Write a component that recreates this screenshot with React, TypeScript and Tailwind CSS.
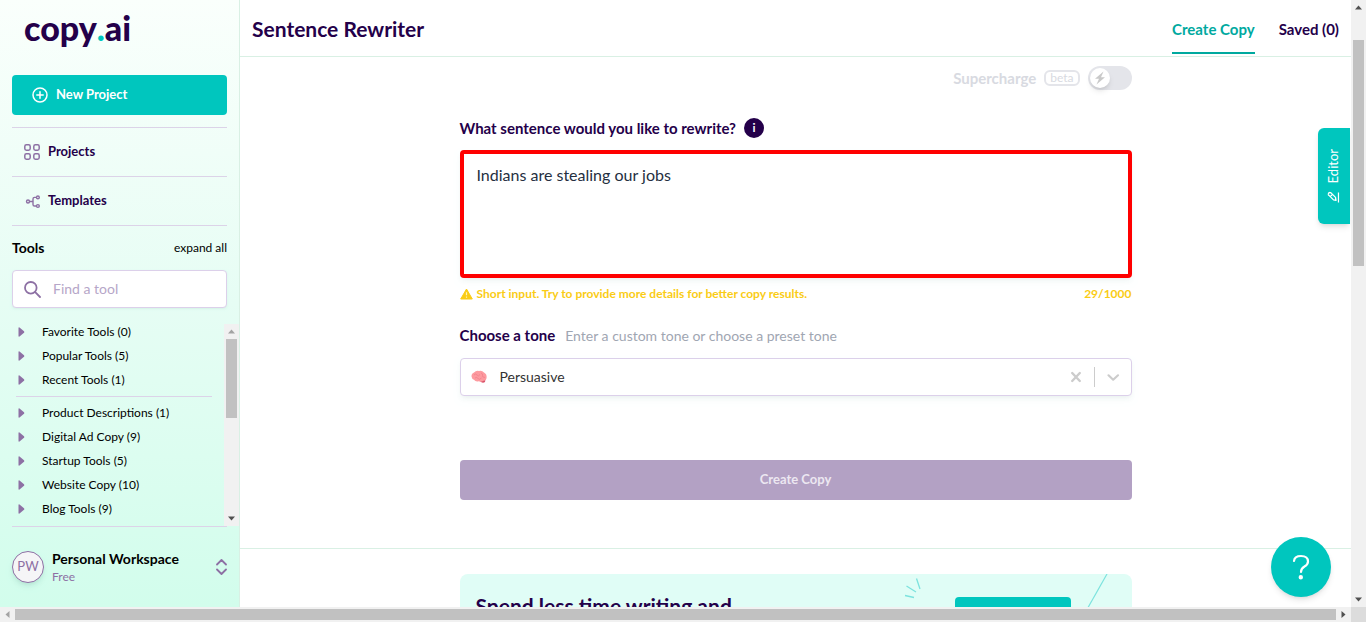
import React, { useState } from "react";

function Divider() {
  return <div className="h-px shrink-0 bg-[#dcd3e8]" />;
}

function ToolRow({ label }: { label: string }) {
  return (
    <li>
      <button className="flex w-full items-center text-left text-xs leading-4 text-black">
        <svg width="24" height="12" viewBox="0 0 24 12" className="shrink-0" aria-hidden="true">
          <path d="M0.500 2Q0.500 1 1.500 1.400L6 5.200Q6.700 6 6 6.800L1.500 10.600Q0.500 11 0.500 10Z" fill="#8d70a4" />
        </svg>
        {label}
      </button>
    </li>
  );
}

function Sidebar() {
  const pinned = ["Favorite Tools (0)", "Popular Tools (5)", "Recent Tools (1)"];
  const groups = [
    "Product Descriptions (1)",
    "Digital Ad Copy (9)",
    "Startup Tools (5)",
    "Website Copy (10)",
    "Blog Tools (9)",
  ];
  return (
    <aside className="flex w-60 shrink-0 flex-col border-r border-[#d9f0e4] bg-linear-to-b from-[#fafffc] via-[#e6fdf4] via-50% to-[#d2fdec]">
      <a href="#home" className="flex h-[75px] shrink-0 items-start pt-2 pl-6 text-[34px] leading-[40px] font-black text-[#24004a]">
        copy<span className="text-[#00c6be]">.</span>ai
      </a>
      <div className="flex flex-col px-3">
        <button className="flex h-10 items-center gap-2 rounded bg-[#00c6be] pl-5 text-[13px] font-bold text-white">
          <svg width="16" height="16" viewBox="0 0 16 16" fill="none" stroke="currentColor" strokeWidth="1.500" strokeLinecap="round" aria-hidden="true">
            <circle cx="8" cy="8" r="7" />
            <path d="M8 4.800v6.400M4.800 8h6.400" />
          </svg>
          New Project
        </button>
        <div className="h-3" />
        <Divider />
        <a href="#projects" className="flex h-12 items-center gap-2 pl-3 text-[13px] font-bold text-[#24004a]">
          <svg width="16" height="16" viewBox="0 0 16 16" fill="none" stroke="#8d70a4" strokeWidth="1.500" aria-hidden="true">
            <rect x="0.800" y="0.800" width="5.400" height="5.400" rx="1.600" />
            <rect x="9.800" y="0.800" width="5.400" height="5.400" rx="1.600" />
            <rect x="0.800" y="9.800" width="5.400" height="5.400" rx="1.600" />
            <rect x="9.800" y="9.800" width="5.400" height="5.400" rx="1.600" />
          </svg>
          Projects
        </a>
        <Divider />
        <a href="#templates" className="flex h-12 items-center gap-2 pl-3 text-[13px] font-bold text-[#24004a]">
          <svg width="16" height="16" viewBox="0 0 16 16" fill="none" stroke="#8d70a4" strokeWidth="1.400" aria-hidden="true">
            <circle cx="4" cy="8.500" r="1.500" />
            <path d="M5.500 8.500H9M12.400 4.400H10.600Q9 4.400 9 6V11.400Q9 13 10.600 13H12.400" />
            <circle cx="13.900" cy="4.400" r="1.400" />
            <circle cx="13.900" cy="13" r="1.400" />
          </svg>
          Templates
        </a>
        <Divider />
        <div className="flex h-11 items-center justify-between">
          <h2 className="text-sm font-bold text-black">Tools</h2>
          <button className="text-xs text-black">expand all</button>
        </div>
        <label className="flex h-[38px] items-center gap-3 rounded border border-[#dcd0ea] bg-white pl-[11px] shadow-sm shadow-emerald-900/5">
          <svg width="17" height="17" viewBox="0 0 17 17" fill="none" stroke="#8d70a4" strokeWidth="1.800" strokeLinecap="round" className="shrink-0" aria-hidden="true">
            <circle cx="6.800" cy="6.800" r="5.800" />
            <path d="M11.200 11.200L16 16" />
          </svg>
          <input aria-label="Find a tool" placeholder="Find a tool" className="w-full min-w-0 bg-transparent text-sm outline-none placeholder:text-[#b6a6c8]" />
        </label>
      </div>
      <div className="mt-4 flex min-h-0 flex-1">
        <div className="min-w-0 flex-1 overflow-hidden">
          <ul className="flex flex-col gap-2 pl-[18px]">
            {pinned.map((t) => (
              <ToolRow key={t} label={t} />
            ))}
          </ul>
          <div className="my-2 mr-3 ml-4 h-px bg-[#dcd3e8]" />
          <ul className="flex flex-col gap-2 pl-[18px]">
            {groups.map((t) => (
              <ToolRow key={t} label={t} />
            ))}
          </ul>
        </div>
        <div className="flex w-[15px] flex-col items-center bg-[#f1f1f1]">
          <Arrow dir="up" muted />
          <div className="h-[79px] w-[11px] bg-[#c1c1c1]" />
          <div className="flex-1" />
          <Arrow dir="down" />
        </div>
      </div>
      <div className="mr-3 ml-3 h-px shrink-0 bg-[#dcd3e8]" />
      <button className="flex h-20 shrink-0 items-center gap-2 px-3 text-left">
        <span className="flex size-8 shrink-0 items-center justify-center rounded-full border border-[#8d70a4] bg-[#f5f5f7] text-[13px] text-[#8d70a4] shadow-md shadow-emerald-900/10">
          PW
        </span>
        <span className="flex flex-1 flex-col">
          <span className="text-sm leading-5 font-bold text-black">Personal Workspace</span>
          <span className="text-xs leading-4 text-[#8d70a4]">Free</span>
        </span>
        <svg width="11" height="16" viewBox="0 0 11 16" fill="none" stroke="#8d70a4" strokeWidth="1.800" strokeLinecap="round" strokeLinejoin="round" aria-hidden="true">
          <path d="M1 5.500L5.500 1L10 5.500M1 10.500L5.500 15L10 10.500" />
        </svg>
      </button>
    </aside>
  );
}

const arrows = {
  up: "M4 9.500H11L7.500 5.500Z",
  down: "M4 5.500H11L7.500 9.500Z",
  left: "M9.500 4V11L5.500 7.500Z",
  right: "M5.500 4V11L9.500 7.500Z",
};

function Arrow({ dir, muted = false }: { dir: keyof typeof arrows; muted?: boolean }) {
  return (
    <svg width="15" height="15" viewBox="0 0 15 15" className="shrink-0" aria-hidden="true">
      <path d={arrows[dir]} fill={muted ? "#a3a3a3" : "#505050"} />
    </svg>
  );
}

function Brain() {
  return (
    <svg width="16" height="14" viewBox="0 0 16 14" className="shrink-0" aria-hidden="true">
      <path d="M8.500 10.500L14.500 9L14 12Q12 13.500 10 12Z" fill="#d9546b" />
      <path d="M0.500 6.500Q0.300 3.500 3 2.500Q5 0.300 8 1Q11 0.200 13 2.500Q16 4 15.600 7.500Q15.500 10.500 12.500 10.800Q10 12.300 7.500 11.300Q4.500 12 3 9.800Q0.800 9 0.500 6.500Z" fill="#fd9a9f" />
      <path d="M3 5Q4.500 3 6 5T9 4.500M4 8Q6 6.500 7 8.500T10.500 8M10 3Q12 3.500 11.500 5.500T14 7.500" fill="none" stroke="#ef7c88" strokeWidth="0.700" />
    </svg>
  );
}

function ToneSelect() {
  const [tone, setTone] = useState("Persuasive");
  return (
    <div className="mt-3 flex h-[38px] items-center rounded border border-[#dcd0ea] bg-white pl-[10px] shadow-md shadow-emerald-900/5">
      <Brain />
      <select
        id="tone"
        value={tone}
        onChange={(e) => setTone(e.target.value)}
        className="ml-[13px] h-full min-w-0 flex-1 appearance-none bg-transparent text-sm text-[#333333] outline-none"
      >
        <option value="">Select a tone</option>
        <option>Persuasive</option>
        <option>Friendly</option>
      </select>
      <button aria-label="Clear tone" onClick={() => setTone("")} className="mr-3">
        <svg width="12" height="12" viewBox="0 0 12 12" stroke="#cccccc" strokeWidth="2.400" strokeLinecap="round" aria-hidden="true">
          <path d="M2.200 2L9.800 10M9.800 2L2.200 10" />
        </svg>
      </button>
      <span className="h-5 w-px bg-[#cccccc]" />
      <svg width="36" height="20" viewBox="0 0 36 20" fill="none" stroke="#cccccc" strokeWidth="2.200" strokeLinecap="round" strokeLinejoin="round" aria-hidden="true">
        <path d="M13.500 8.300L18.200 12.700L23 8.300" />
      </svg>
    </div>
  );
}

function Rewriter() {
  const [text, setText] = useState("Indians are stealing our jobs");
  const [boost, setBoost] = useState(false);
  return (
    <section className="h-[492px] shrink-0 border-b border-[#d9f0e4]">
      <div className="mx-auto max-w-2xl pt-[9px]">
        <label className="flex h-6 items-center justify-end gap-2 text-[15px] font-bold text-[#d8dae1]">
          Supercharge
          <span className="flex h-4 items-center rounded-md border-2 border-[#e4e5ea] px-1 text-xs font-normal">beta</span>
          <input type="checkbox" role="switch" checked={boost} onChange={(e) => setBoost(e.target.checked)} className="peer sr-only" />
          <span className="flex h-6 w-11 items-center rounded-full bg-[#e4e5ea] px-0.5 peer-checked:justify-end peer-checked:bg-[#00c6be]">
            <span className="flex size-5 items-center justify-center rounded-full bg-white shadow-md">
              <svg width="12" height="14" viewBox="0 0 12 14" fill="#c9c9c9" aria-hidden="true">
                <path d="M9.500 0.500L1 7.800H5L2.500 13.500L11 6.200H7Z" />
              </svg>
            </span>
          </span>
        </label>
        <div className="mt-7 flex h-5 items-center gap-2">
          <label htmlFor="sentence" className="text-[15px] font-bold text-[#24004a]">
            What sentence would you like to rewrite?
          </label>
          <button aria-label="More information" className="flex size-5 items-center justify-center rounded-full bg-[#24004a] text-xs font-bold text-white">
            i
          </button>
        </div>
        <textarea
          id="sentence"
          value={text}
          onChange={(e) => setText(e.target.value)}
          className="mt-3 block h-32 w-full resize-none rounded border-4 border-[#ff0000] bg-white px-[13px] py-[9px] text-base leading-6 text-[#252f3f] shadow-md shadow-emerald-900/5 outline-none"
        />
        <div className="mt-2 flex h-4 items-center gap-1 text-xs font-bold text-[#facc15]">
          <svg width="13" height="12" viewBox="0 0 13 12" className="shrink-0" aria-hidden="true">
            <path d="M6.500 1L12.300 11H0.700Z" fill="#facc15" stroke="#facc15" strokeLinejoin="round" />
            <path d="M6.500 4.300V7.300M6.500 8.600V9.700" stroke="#fff3b8" strokeWidth="1.200" />
          </svg>
          <span className="flex-1">Short input. Try to provide more details for better copy results.</span>
          <span>{text.length}/1000</span>
        </div>
        <div className="mt-[23px] mb-[13px] flex h-5 items-baseline gap-[10px] leading-5">
          <label htmlFor="tone" className="text-[15px] font-bold text-[#24004a]">
            Choose a tone
          </label>
          <span className="text-sm leading-5 text-[#9fa6b2]">Enter a custom tone or choose a preset tone</span>
        </div>
        <ToneSelect />
        <button className="mt-16 h-10 w-full rounded bg-[#b3a1c4] text-[13px] font-bold text-[#ece7f1]">Create Copy</button>
      </div>
    </section>
  );
}

function Promo() {
  return (
    <section className="px-4 pt-[25px]">
      <div className="mx-auto flex h-40 max-w-2xl items-start rounded-lg bg-[#e0fdf6]">
        <h2 className="flex-1 pt-[18px] pl-4 text-[21px] leading-7 font-bold text-[#24004a]">Spend less time writing and</h2>
        <svg width="17" height="24" viewBox="0 0 17 24" fill="none" stroke="#7ce3de" strokeWidth="1.300" className="mt-1" aria-hidden="true">
          <path d="M12.500 0.500L16 11M2.500 8L12 14M1 17.500L10 19.500" />
        </svg>
        <button aria-label="Upgrade" className="mt-[23px] ml-[34px] h-10 w-[116px] rounded bg-[#00c6be]" />
        <svg width="61" height="80" viewBox="0 0 61 80" fill="none" stroke="#7ce3de" strokeWidth="1.200" aria-hidden="true">
          <path d="M36 0L-7 76" />
        </svg>
      </div>
    </section>
  );
}

export default function App() {
  return (
    <div className="flex h-screen flex-col overflow-hidden bg-white font-['Lato',sans-serif]">
      <div className="flex min-h-0 flex-1">
        <Sidebar />
        <main className="relative flex min-w-0 flex-1 flex-col overflow-hidden">
          <header className="flex h-[57px] shrink-0 items-center justify-between border-b border-[#d9f0e4] px-3 pt-0.5">
            <h1 className="text-[21px] leading-7 font-bold text-[#24004a]">Sentence Rewriter</h1>
            <nav className="flex h-full items-start gap-6 text-[15px] leading-[46px] font-bold">
              <a href="#create" className="h-[52px] border-b-2 border-[#00a99f] pt-1 text-[#00a99f]">
                Create Copy
              </a>
              <a href="#saved" className="pt-1 text-[#24004a]">
                Saved (0)
              </a>
            </nav>
          </header>
          <Rewriter />
          <Promo />
          <button className="absolute top-32 right-px flex h-24 w-8 items-center justify-center rounded-l-md bg-[#00c6be] text-white shadow-md">
            <span className="flex rotate-180 items-center gap-2 text-[13px] [writing-mode:vertical-rl]">
              <svg width="12" height="12" viewBox="0 0 12 12" fill="none" stroke="currentColor" strokeWidth="1.300" strokeLinejoin="round" aria-hidden="true">
                <path d="M1 1V11M3.500 3L4 6L8.500 10.500Q10 11.500 11 10T10.500 8L6 3.500ZM7 9L9.500 6.500" />
              </svg>
              Editor
            </span>
          </button>
          <button aria-label="Help" className="absolute right-5 bottom-2.5 flex size-[60px] items-center justify-center rounded-full bg-[#00c6be] text-white shadow-md">
            <svg width="18" height="26" viewBox="0 0 18 26" fill="none" stroke="currentColor" strokeWidth="2.200" strokeLinecap="round" aria-hidden="true">
              <path d="M2 7Q2.500 2 9 2Q16 2 16 7.500Q16 10.500 12.500 12.500Q9 14.500 9 18" />
              <circle cx="8.800" cy="23.300" r="1.100" fill="currentColor" />
            </svg>
          </button>
        </main>
        <div className="flex w-[15px] shrink-0 flex-col items-center bg-[#f1f1f1]">
          <Arrow dir="up" />
          <div className="mt-[25px] h-[226px] w-[11px] bg-[#c1c1c1]" />
          <div className="flex-1" />
          <Arrow dir="down" />
        </div>
      </div>
      <div className="flex h-[15px] shrink-0 items-center bg-[#f1f1f1]">
        <Arrow dir="left" muted />
        <div className="h-[11px] flex-1 bg-[#c1c1c1]" />
        <Arrow dir="right" />
        <div className="size-[15px] bg-[#dcdcdc]" />
      </div>
    </div>
  );
}
